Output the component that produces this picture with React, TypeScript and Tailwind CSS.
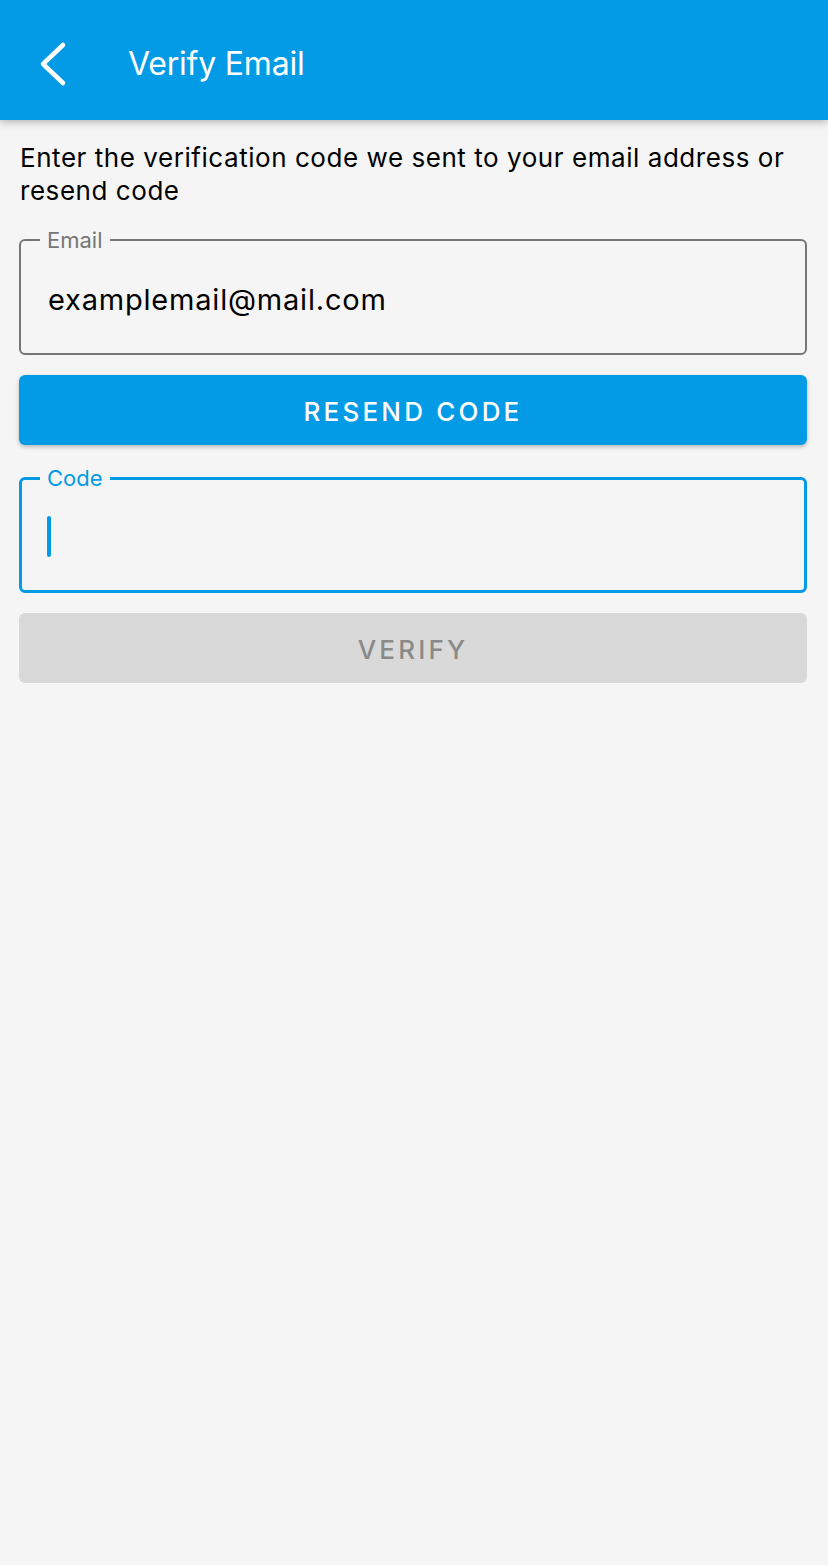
import React from "react";

function BackIcon() {
  return (
    <svg width="30" height="46" viewBox="0 0 30 46" fill="none">
      <path d="M24 4 L4 23 L24 42" stroke="white" strokeWidth="4.5" strokeLinecap="round" strokeLinejoin="round" />
    </svg>
  );
}

export default function App() {
  return (
    <div className="min-h-[1565px] w-full bg-[#f5f5f5] font-['Inter','Noto_Sans',sans-serif]">
      {/* header */}
      <header className="relative z-10 flex h-[120px] items-center bg-[#039be5] pl-[39px] pt-[8px] shadow-[0_2px_8px_rgba(0,0,0,0.28)]">
        <BackIcon />
        <h1 className="ml-[59px] text-[32px] font-normal tracking-[-0.2px] text-white">Verify Email</h1>
      </header>

      <main className="pl-[19px] pr-[21px] pt-[21px]">
        <p className="pl-[1px] text-[26px] leading-[33px] tracking-[0.55px] text-black">
          Enter the verification code we sent to your email address or resend code
        </p>

        {/* email field */}
        <fieldset className="mt-[20px] h-[128px] rounded-[6px] border-2 border-[#767676] px-0">
          <legend className="ml-[19px] px-[7px] text-[22px] leading-[26px] text-[#767676]">Email</legend>
          <div className="pl-[27px] pt-[29px] text-[29px] leading-[36px] tracking-[0.8px] text-black">examplemail@mail.com</div>
        </fieldset>

        <button className="mt-[20px] flex h-[70px] w-full items-center justify-center rounded-[6px] bg-[#039be5] pt-[2px] text-[26px] font-medium tracking-[3.2px] text-white shadow-[0_2px_4px_rgba(0,0,0,0.25)]">
          RESEND CODE
        </button>

        {/* code field */}
        <fieldset className="mt-[20px] h-[128px] rounded-[6px] border-[3px] border-[#039be5] px-0">
          <legend className="ml-[18px] px-[7px] text-[22px] leading-[26px] text-[#039be5]">Code</legend>
          <div className="flex pl-[25px] pt-[25px]">
            <span className="h-[41px] w-[4px] rounded-full bg-[#039be5]" />
          </div>
        </fieldset>

        <button className="mt-[20px] flex h-[70px] w-full items-center justify-center rounded-[6px] bg-[#d9d9d9] pt-[2px] text-[26px] font-medium tracking-[3.2px] text-[#8a8a8a]">
          VERIFY
        </button>
      </main>
    </div>
  );
}
